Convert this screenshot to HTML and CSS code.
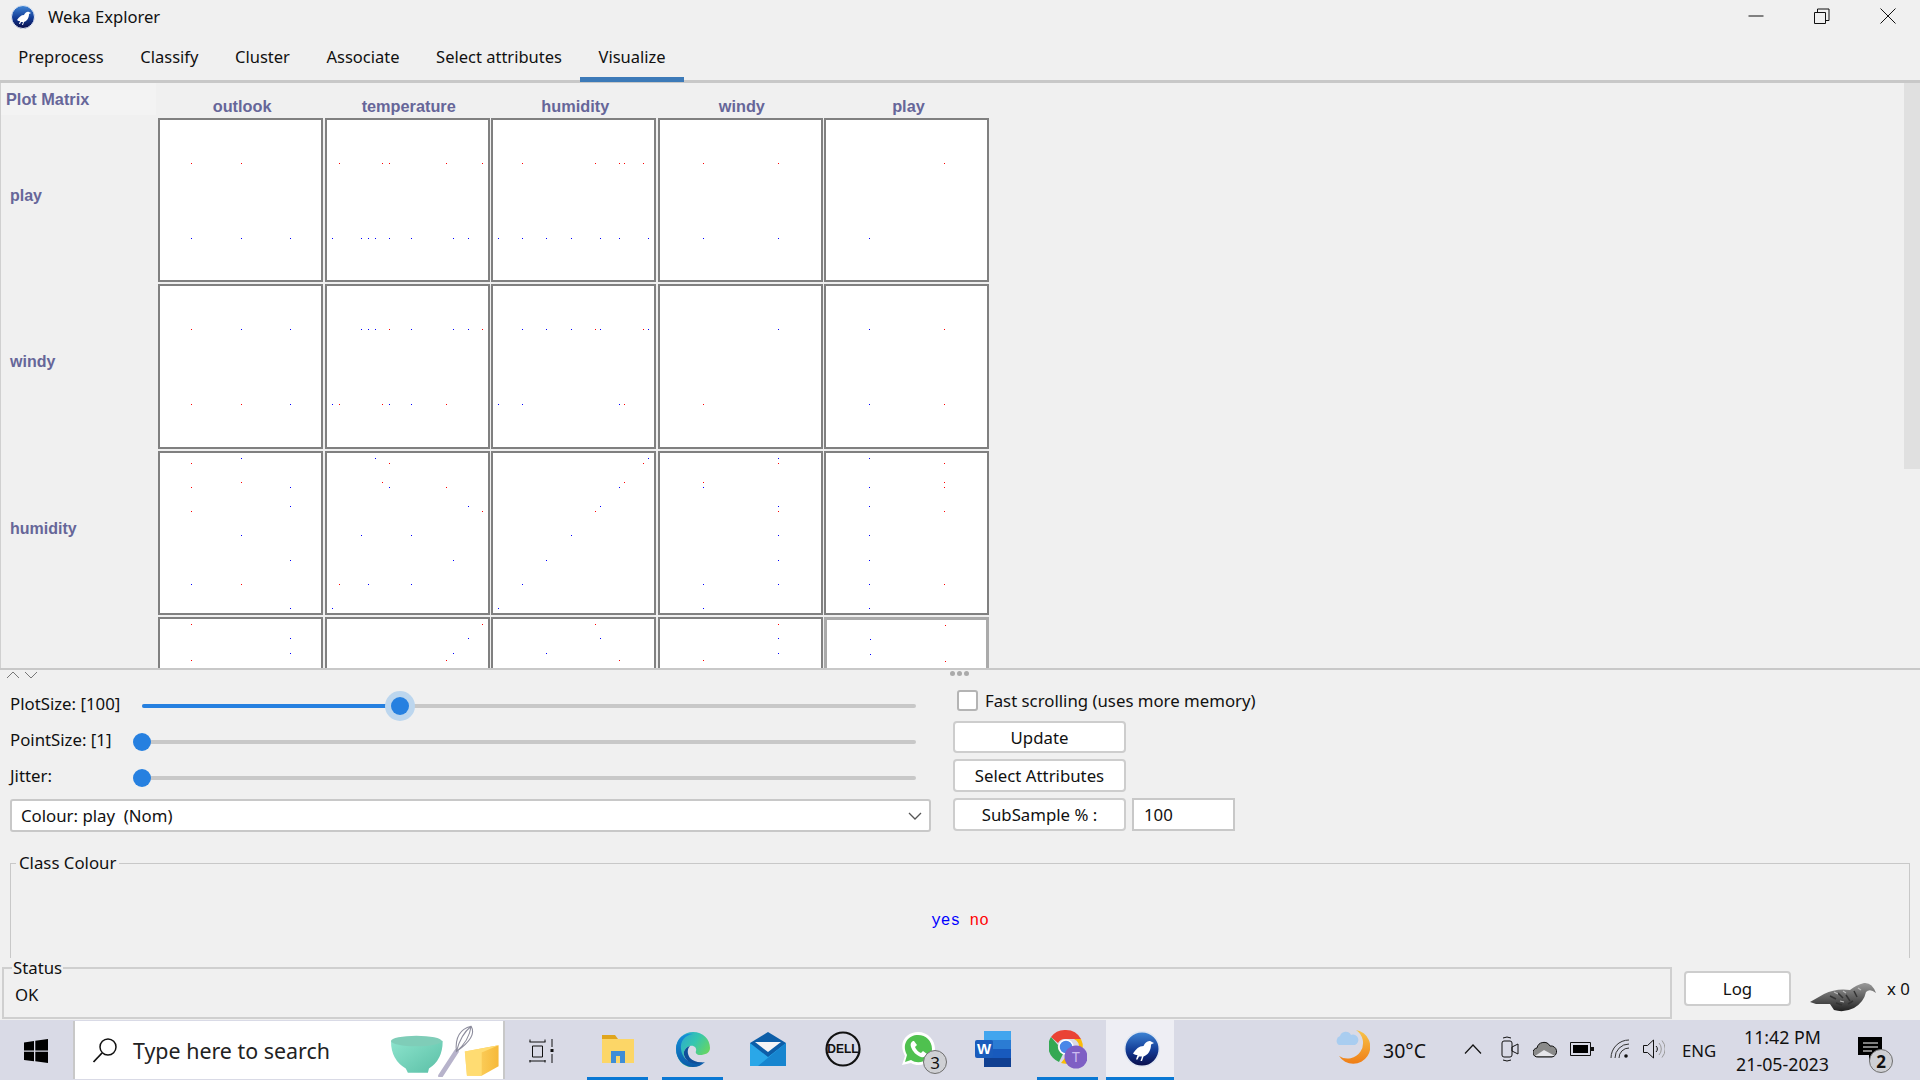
FILE: index.html
```html
<!DOCTYPE html>
<html lang="en">
<head>
<meta charset="UTF-8">
<meta name="viewport" content="width=device-width, initial-scale=1.0">
<title>Weka Explorer</title>
<link rel="stylesheet" href="styles.css">
</head>
<body>

<!-- title bar -->
<div class="titlebar">
    <svg class="app-icon" width="24" height="24" viewBox="0 0 24 24">
        <defs>
            <linearGradient id="wekaBlue" x1="0" y1="0" x2="0" y2="1">
                <stop offset="0" stop-color="#3f86d6"/>
                <stop offset="0.55" stop-color="#123a94"/>
                <stop offset="1" stop-color="#0a0d4a"/>
            </linearGradient>
        </defs>
        <circle cx="12" cy="12" r="11.5" fill="url(#wekaBlue)" stroke="#dfe6f2"/>
        <path d="M6 15c2-3 4-5 7-5 1-2 3-4 5-3l2 1-2 1c0 4-2 7-5 8l-1 3h-1l1-3h-2l-1 2h-1l1-3c-1 0-2 0-3-1z" fill="#fff"/>
    </svg>
    <span class="app-title">Weka Explorer</span>
    <div class="winbtns">
        <svg width="16" height="16" viewBox="0 0 16 16"><path d="M0.5 8h15" stroke="#111" fill="none"/></svg>
        <svg width="16" height="16" viewBox="0 0 16 16"><path d="M0.5 4.5h11v11h-11zM3.5 4.5v-3.500h11.500v11.500h-3.500" stroke="#111" fill="none"/></svg>
        <svg width="16" height="16" viewBox="0 0 16 16"><path d="M0.500 0.500l15 15M15.500 0.500l-15 15" stroke="#111" fill="none"/></svg>
    </div>
</div>

<!-- tabs -->
<div class="tabs">
    <div class="tab">Preprocess</div>
    <div class="tab">Classify</div>
    <div class="tab">Cluster</div>
    <div class="tab">Associate</div>
    <div class="tab">Select attributes</div>
    <div class="tab tab-active">Visualize</div>
</div>

<!-- plot matrix -->
<div class="matrix">
    <div class="matrix-grid">
        <div class="corner">Plot Matrix</div>
        <div class="col-label">outlook</div>
        <div class="col-label">temperature</div>
        <div class="col-label">humidity</div>
        <div class="col-label">windy</div>
        <div class="col-label">play</div>

        <div class="row-label">play</div>
        <div class="cell" data-x="outlook" data-y="play"></div>
        <div class="cell" data-x="temperature" data-y="play"></div>
        <div class="cell" data-x="humidity" data-y="play"></div>
        <div class="cell" data-x="windy" data-y="play"></div>
        <div class="cell" data-x="play" data-y="play"></div>

        <div class="row-label">windy</div>
        <div class="cell" data-x="outlook" data-y="windy"></div>
        <div class="cell" data-x="temperature" data-y="windy"></div>
        <div class="cell" data-x="humidity" data-y="windy"></div>
        <div class="cell" data-x="windy" data-y="windy"></div>
        <div class="cell" data-x="play" data-y="windy"></div>

        <div class="row-label">humidity</div>
        <div class="cell" data-x="outlook" data-y="humidity"></div>
        <div class="cell" data-x="temperature" data-y="humidity"></div>
        <div class="cell" data-x="humidity" data-y="humidity"></div>
        <div class="cell" data-x="windy" data-y="humidity"></div>
        <div class="cell" data-x="play" data-y="humidity"></div>

        <div class="row-label"></div>
        <div class="cell" data-x="outlook" data-y="temperature"></div>
        <div class="cell" data-x="temperature" data-y="temperature"></div>
        <div class="cell" data-x="humidity" data-y="temperature"></div>
        <div class="cell" data-x="windy" data-y="temperature"></div>
        <div class="cell cell-selected" data-x="play" data-y="temperature"></div>
    </div>
    <div class="scroll-thumb"></div>
</div>

<!-- split pane handle -->
<div class="splitbar">
    <svg width="32" height="8" viewBox="0 0 32 8"><path d="M1 7l6-6 6 6M19 1l6 6 6-6" stroke="#777" fill="none"/></svg>
    <span class="grip"><i></i><i></i><i></i></span>
</div>

<!-- controls -->
<div class="controls">
    <div class="controls-left">
        <div class="slider-row">
            <span class="slider-label">PlotSize: [100]</span>
            <div class="track">
                <div class="track-fill" style="width:33.3%"></div>
                <div class="thumb thumb-focus" style="left:33.3%"></div>
            </div>
        </div>
        <div class="slider-row">
            <span class="slider-label">PointSize: [1]</span>
            <div class="track"><div class="thumb" style="left:0%"></div></div>
        </div>
        <div class="slider-row">
            <span class="slider-label">Jitter:</span>
            <div class="track"><div class="thumb" style="left:0%"></div></div>
        </div>
        <div class="combo">
            <span>Colour: play&nbsp; (Nom)</span>
            <svg width="14" height="8" viewBox="0 0 14 8"><path d="M1 1l6 6 6-6" stroke="#555" stroke-width="1.300" fill="none"/></svg>
        </div>
    </div>
    <div class="controls-right">
        <label class="check-row"><span class="checkbox"></span>Fast scrolling (uses more memory)</label>
        <button class="btn btn-update">Update</button>
        <button class="btn btn-select">Select Attributes</button>
        <div class="subsample">
            <button class="btn">SubSample % :</button>
            <div class="field">100</div>
        </div>
    </div>
</div>

<!-- class colour -->
<fieldset class="class-colour">
    <legend>Class Colour</legend>
    <div class="legend-values"><span class="val-yes">yes</span> <span class="val-no">no</span></div>
</fieldset>

<!-- status -->
<div class="status-row">
    <fieldset class="status">
        <legend>Status</legend>
        <div class="status-text">OK</div>
    </fieldset>
    <button class="btn btn-log">Log</button>
    <svg class="status-bird" width="66" height="30" viewBox="0 0 66 30">
        <defs>
            <linearGradient id="birdGrey" x1="0" y1="0" x2="0" y2="1">
                <stop offset="0" stop-color="#9a9a9a"/>
                <stop offset="0.6" stop-color="#555"/>
                <stop offset="1" stop-color="#222"/>
            </linearGradient>
        </defs>
        <path d="M0 20L14 12Q26 6 40 8Q46 3 54 1Q62 0 66 11Q60 6 56 10Q54 20 44 26Q34 31 24 28L20 22L6 22Z" fill="url(#birdGrey)"/>
        <path d="M20 14l6 3M28 11l5 5M36 13l4 6M26 21l6 2M44 9l3 6M38 22l5-3" stroke="#333" stroke-width="1.500" fill="none"/>
        <path d="M24 10l4 2M33 9l3 2M30 19l4 1M48 6l3 2" stroke="#bbb" stroke-width="1.200" fill="none"/>
    </svg>
    <span class="status-count">x 0</span>
</div>

<!-- taskbar -->
<div class="taskbar">
    <div class="start">
        <svg width="24" height="24" viewBox="0 0 24 24"><path d="M0 3.400l10-1.400v9.500H0zM11.300 1.800L24 0v11.500H11.300zM0 12.800h10v9.500L0 20.900zM11.300 12.800H24V24l-12.700-1.800z" fill="#000"/></svg>
    </div>
    <div class="search">
        <svg width="26" height="26" viewBox="0 0 26 26"><circle cx="16" cy="10" r="8" stroke="#111" stroke-width="1.500" fill="none"/><path d="M10 16L1.500 25" stroke="#111" stroke-width="1.800"/></svg>
        <span class="search-text">Type here to search</span>
        <svg class="search-art" width="116" height="53" viewBox="0 0 110 50">
            <defs>
                <linearGradient id="bowl" x1="0" y1="0" x2="1" y2="1">
                    <stop offset="0" stop-color="#8fe6cf"/>
                    <stop offset="1" stop-color="#5bbfa6"/>
                </linearGradient>
                <linearGradient id="butter" x1="0" y1="0" x2="1" y2="0">
                    <stop offset="0" stop-color="#ffdc72"/>
                    <stop offset="1" stop-color="#f6b93a"/>
                </linearGradient>
            </defs>
            <path d="M0 16Q22 8 49 16Q49 34 36 42L35 46H16L14 42Q0 34 0 16Z" fill="url(#bowl)"/>
            <ellipse cx="24" cy="16" rx="24" ry="5" fill="#7fcdb8"/>
            <path d="M47 49L62 26" stroke="#b7b3cb" stroke-width="4.500" stroke-linecap="round"/>
            <path d="M62 26Q60 6 76 2Q82 12 62 26ZM62 26Q66 10 76 2M62 26Q74 16 76 2" stroke="#8d8d9d" stroke-width="1" fill="none"/>
            <path d="M70 26L102 20V40L86 49H72Z" fill="url(#butter)"/>
            <path d="M70 26L102 20L86 27V49H72Z" fill="#ffdc72"/>
        </svg>
    </div>
    <div class="taskview">
        <svg width="26" height="24" viewBox="0 0 26 24"><path d="M0.500 3h16M0.500 22h16M3.500 7h10v11h-10zM1 0.500v2.500M16 0.500v2.500M1 21v2.500M16 21v2.500" stroke="#111" fill="none"/><path d="M23 0v8M23 15v9" stroke="#111" fill="none"/><rect x="21.500" y="10" width="3" height="3" fill="#111"/></svg>
    </div>

    <div class="tb-app tb-open">
        <svg width="34" height="34" viewBox="0 0 34 34">
            <path d="M1 3h13l3 4H1z" fill="#e0a51d"/>
            <path d="M1 7h32v24H1z" fill="#fcd667"/>
            <path d="M10 31V19h14v12h-5v-7h-4v7z" fill="#3f8dd6"/>
        </svg>
    </div>
    <div class="tb-app tb-open">
        <svg width="36" height="36" viewBox="0 0 36 36">
            <defs>
                <linearGradient id="edgeA" x1="0" y1="0" x2="1" y2="0.700">
                    <stop offset="0" stop-color="#2a9fd8"/>
                    <stop offset="0.5" stop-color="#35c6b0"/>
                    <stop offset="1" stop-color="#74d94f"/>
                </linearGradient>
                <linearGradient id="edgeB" x1="0" y1="0" x2="0" y2="1">
                    <stop offset="0" stop-color="#1690da"/>
                    <stop offset="1" stop-color="#0b5aa8"/>
                </linearGradient>
            </defs>
            <path d="M18 1C28 1 35 8 35 17c0 5-5 7-10 7-3 0-5-2-4-4 1-3-2-6-6-5-4 1-7 5-6 9 1 6 7 11 17 9-3 2-6 3-10 3C8 36 1 28 1 18 1 8 9 1 18 1z" fill="url(#edgeA)"/>
            <path d="M1 18C1 8 9 1 18 3 10 4 5 10 6 18c1 9 8 15 18 14 2 0 4-.5 6-1-3 3-7 5-12 5C8 36 1 28 1 18z" fill="url(#edgeB)"/>
            <path d="M9 24c-1-4 2-8 6-9-3 3-3 8 0 12 3 3 8 5 14 4-8 4-18 1-20-7z" fill="#0e4f9a"/>
        </svg>
    </div>
    <div class="tb-app">
        <svg width="36" height="34" viewBox="0 0 36 34">
            <path d="M18 0L36 11v23H0V11z" fill="#0d5ea8"/>
            <path d="M0 11l18 14 18-14v23H0z" fill="#2aa7e8"/>
            <path d="M36 34H8l28-23z" fill="#1785cf"/>
            <path d="M5 10h26L18 20z" fill="#f4f4f6"/>
        </svg>
    </div>
    <div class="tb-app">
        <svg width="36" height="36" viewBox="0 0 36 36">
            <circle cx="18" cy="18" r="16.500" fill="none" stroke="#111" stroke-width="2.200"/>
            <text x="18" y="22" text-anchor="middle" class="dell-text">DELL</text>
        </svg>
    </div>
    <div class="tb-app">
        <svg width="36" height="36" viewBox="0 0 36 36">
            <path d="M2 34l3-9C-3 10 8 1 18 1c10 0 17 8 17 17 0 12-14 20-24 14z" fill="#fff"/>
            <path d="M5 31l2-7C1 12 9 4 18 4c8 0 14 6 14 14 0 10-12 17-21 11z" fill="#4fc14f"/>
            <path d="M13 10c-2 1-3 3-2 6 2 5 5 8 10 10 3 1 5-1 6-3l-4-3-2 2c-3-1-5-4-6-6l2-2-3-4z" fill="#fff"/>
        </svg>
        <span class="tb-badge tb-badge-grey">3</span>
    </div>
    <div class="tb-app">
        <svg width="36" height="36" viewBox="0 0 36 36">
            <path d="M9 0h27v9H9z" fill="#41a5ee"/>
            <path d="M9 9h27v9H9z" fill="#2b7cd3"/>
            <path d="M9 18h27v9H9z" fill="#185abd"/>
            <path d="M9 27h27v9H9z" fill="#103f91"/>
            <rect x="0" y="9" width="18" height="18" rx="2" fill="#1a5cbc"/>
            <text x="9" y="23" text-anchor="middle" class="word-text">W</text>
        </svg>
    </div>
    <div class="tb-app tb-open">
        <svg width="38" height="40" viewBox="0 0 38 40">
            <path d="M17 1A17 17 0 0 1 32 10H17A8 8 0 0 0 9 14L2 8A17 17 0 0 1 17 1z" fill="#ea4335"/>
            <path d="M2 8l7 8a8 8 0 0 0 5 9L10 33A17 17 0 0 1 2 8z" fill="#34a853"/>
            <path d="M32 10a17 17 0 0 1-20 24l7-9a8 8 0 0 0 6-15z" fill="#fbbc05"/>
            <circle cx="17" cy="18" r="7" fill="#4a87e8" stroke="#fff" stroke-width="1.500"/>
            <circle cx="27" cy="28" r="11.500" fill="#7e5fc4"/>
            <text x="27" y="33" text-anchor="middle" class="avatar-text">T</text>
        </svg>
    </div>
    <div class="tb-app tb-open tb-active">
        <svg width="36" height="36" viewBox="0 0 24 24">
            <circle cx="12" cy="12" r="11.500" fill="url(#wekaBlue)" stroke="#dfe6f2"/>
            <path d="M6 15c2-3 4-5 7-5 1-2 3-4 5-3l2 1-2 1c0 4-2 7-5 8l-1 3h-1l1-3h-2l-1 2h-1l1-3c-1 0-2 0-3-1z" fill="#fff"/>
        </svg>
    </div>

    <!-- system tray -->
    <div class="tray">
        <svg class="t-weather" width="34" height="38" viewBox="0 0 34 38">
            <defs>
                <linearGradient id="moon" x1="0" y1="0" x2="0" y2="1">
                    <stop offset="0" stop-color="#f8c54a"/>
                    <stop offset="1" stop-color="#ef7d16"/>
                </linearGradient>
            </defs>
            <path d="M20 2A17 17 0 1 1 3 28A14 14 0 0 0 20 2z" fill="url(#moon)"/>
            <path d="M3 17a5 5 0 0 1 1-9 6 6 0 0 1 11-1 5 5 0 0 1 4 10z" fill="#a9cdf0"/>
        </svg>
        <span class="t-temp">30°C</span>
        <svg class="t-chevron" width="18" height="10" viewBox="0 0 18 10"><path d="M1 9.500l8-8.500 8 8.500" stroke="#111" stroke-width="1.200" fill="none"/></svg>
        <svg class="t-cam" width="18" height="26" viewBox="0 0 18 26"><path d="M1 7a2 2 0 0 1 2-2h6a2 2 0 0 1 2 2v12a2 2 0 0 1-2 2H3a2 2 0 0 1-2-2zM11 11l6-3v10l-6-3z" stroke="#111" fill="none"/><path d="M2 2q4-2 8 0M2 24q4 2 8 0" stroke="#111" fill="none"/></svg>
        <svg class="t-cloud" width="24" height="18" viewBox="0 0 24 18"><path d="M5 17a4.500 4.500 0 0 1-1-9 7 7 0 0 1 13-2 5.500 5.500 0 0 1 2 11z" fill="#8a8a8a" stroke="#111"/><path d="M2 16l9-6 11 6z" fill="#e6e6ea"/></svg>
        <svg class="t-battery" width="24" height="14" viewBox="0 0 24 14"><path d="M0.500 0.500h20v13h-20z" stroke="#111" fill="none"/><rect x="3" y="3" width="15" height="8" fill="#000"/><rect x="21" y="5" width="3" height="4" fill="#111"/></svg>
        <svg class="t-wifi" width="20" height="20" viewBox="0 0 20 20"><path d="M1 19A18 18 0 0 1 19 1M5 19A14 14 0 0 1 19 5M9 19A10 10 0 0 1 19 9" stroke="#333" fill="none"/><circle cx="16" cy="17" r="1.800" fill="#111"/></svg>
        <svg class="t-volume" width="22" height="20" viewBox="0 0 22 20"><path d="M0.500 6.500h4l6-5.500v18l-6-5.500h-4z" stroke="#111" fill="none"/><path d="M13 7a4 4 0 0 1 0 6" stroke="#111" fill="none"/><path d="M16 4a9 9 0 0 1 0 12M19 1.500a13 13 0 0 1 0 17" stroke="#999" fill="none"/></svg>
        <span class="t-lang">ENG</span>
        <div class="t-clock">
            <span>11:42 PM</span>
            <span>21-05-2023</span>
        </div>
        <div class="t-notify">
            <svg width="24" height="24" viewBox="0 0 24 24"><path d="M0 0h24v18H15l-4 6v-6H0z" fill="#000"/><path d="M5 6h15M5 10h15M5 14h9" stroke="#fff" fill="none"/></svg>
            <span class="tb-badge tb-badge-notify">2</span>
        </div>
    </div>
</div>

<script src="plot.js"></script>
</body>
</html>
```

FILE: styles.css
```css
* {
    box-sizing: border-box;
}
body {
    margin: 0;
    width: 1920px;
    height: 1080px;
    overflow: hidden;
    background-color: #f0f0f0;
    color: #111;
    font-family: "Noto Sans", "Open Sans", sans-serif;
    font-size: 16.800px;
    display: flex;
    flex-direction: column;
}

/* title bar */
.titlebar {
    height: 40px;
    flex: none;
    display: flex;
    align-items: flex-start;
    padding: 5px 0 0 11px;
}
.app-title {
    margin-left: 13px;
    font-size: 16.600px;
    line-height: 24px;
}
.winbtns {
    margin-left: auto;
    margin-top: 3px;
    margin-right: 24px;
    display: flex;
    gap: 50px;
}

/* tabs */
.tabs {
    height: 43px;
    flex: none;
    display: flex;
    border-bottom: 3px solid #c8c8c8;
}
.tab {
    padding: 0 18.300px;
    line-height: 34px;
    height: 42px;
    font-size: 16.500px;
}
.tab-active {
    border-bottom: 5px solid #3d7ab8;
}

/* plot matrix */
.matrix {
    height: 585px;
    flex: none;
    overflow: hidden;
    position: relative;
    border-left: 1px solid #d0d0d0;
}
.matrix-grid {
    display: grid;
    grid-template-columns: 155.500px repeat(5, 165px);
    column-gap: 1.600px;
    grid-template-rows: 33px repeat(4, 164.300px);
    row-gap: 2px;
}
.corner {
    background-color: #f3f3f3;
    height: 32px;
    margin-right: 1px;
    padding-left: 5px;
    font-family: "Liberation Sans", Arial, sans-serif;
    font-weight: bold;
    font-size: 16.300px;
    line-height: 32px;
    color: #666699;
}
.col-label {
    font-family: "Liberation Sans", Arial, sans-serif;
    font-weight: bold;
    font-size: 16.300px;
    color: #666699;
    text-align: center;
    padding-left: 3px;
    line-height: 46px;
    height: 33px;
}
.row-label {
    font-family: "Liberation Sans", Arial, sans-serif;
    font-weight: bold;
    font-size: 16px;
    color: #666699;
    padding: 69px 0 0 9px;
}
.cell {
    background-color: #fff;
    border: 2px solid #808080;
    position: relative;
}
.cell svg {
    display: block;
    position: absolute;
    top: 0;
    left: 0;
}
.cell-selected {
    border: 3px solid #aaa;
    border-bottom: none;
}
.scroll-thumb {
    position: absolute;
    top: 0;
    right: 0;
    width: 16px;
    height: 386px;
    background-color: #e0e0e0;
}

/* split pane handle */
.splitbar {
    height: 18px;
    flex: none;
    display: flex;
    align-items: flex-start;
    border-top: 2px solid #c8c8c8;
    padding: 1px 0 0 6px;
}
.grip {
    margin-left: 912px;
    margin-top: 0;
    display: flex;
    gap: 2px;
}
.grip i {
    width: 5px;
    height: 5px;
    border-radius: 50%;
    background-color: #aaa;
}

/* controls */
.controls {
    flex: none;
    height: 166px;
    display: flex;
    padding-left: 10px;
}
.controls-left {
    width: 921px;
    flex: none;
    display: flex;
    flex-direction: column;
    padding-top: 2px;
}
.slider-row {
    height: 36px;
    display: flex;
    align-items: center;
}
.slider-label {
    width: 132px;
    flex: none;
    margin-top: -5px;
}
.track {
    position: relative;
    flex: 1;
    margin-right: 15px;
    height: 4px;
    border-radius: 2px;
    background-color: #c8c8c8;
}
.track-fill {
    height: 4px;
    border-radius: 2px;
    background-color: #2680e0;
}
.thumb {
    position: absolute;
    top: 50%;
    width: 18px;
    height: 18px;
    margin: -9px 0 0 -9px;
    border-radius: 50%;
    background-color: #2680e0;
}
.thumb-focus {
    box-shadow: 0 0 0 6px #bcd6ee;
}
.combo {
    margin-top: 3px;
    height: 33px;
    display: flex;
    align-items: center;
    justify-content: space-between;
    padding: 0 7px 0 9px;
    background-color: #fff;
    border: 2px solid #c8c8c8;
    border-radius: 3px;
}
.controls-right {
    margin-left: 22px;
    display: flex;
    flex-direction: column;
    gap: 6px;
}
.check-row {
    height: 30px;
    display: flex;
    align-items: center;
    padding-left: 4px;
    margin-top: -1px;
    margin-bottom: 0;
}
.checkbox {
    width: 21px;
    height: 21px;
    margin-right: 7px;
    background-color: #fff;
    border: 2px solid #b4b4b4;
    border-radius: 3px;
}
.btn {
    width: 173px;
    background-color: #fff;
    border: 2px solid #cdcdcd;
    border-radius: 4px;
    padding: 0;
    font-family: inherit;
    font-size: 16.800px;
    color: #111;
}
.btn-update {
    height: 32px;
}
.btn-select {
    height: 33px;
}
.subsample {
    height: 33px;
    display: flex;
    gap: 6px;
}
.field {
    width: 103px;
    background-color: #fff;
    border: 2px solid #c8c8c8;
    padding-left: 10px;
    line-height: 29px;
}

/* class colour */
.class-colour {
    flex: none;
    height: 106px;
    margin: 0 10px;
    padding: 0;
    border: 1px solid #c8c8c8;
    border-bottom: none;
}
.class-colour legend {
    margin-left: 5px;
    padding: 0 3px;
    line-height: 22px;
}
.legend-values {
    padding-top: 38px;
    text-align: center;
    font-family: "Liberation Mono", monospace;
    font-size: 16px;
    line-height: 18px;
}
.val-yes {
    color: #0000ff;
}
.val-no {
    color: #ff0000;
}

/* status */
.status-row {
    flex: 1;
    display: flex;
    align-items: flex-start;
    min-height: 0;
}
.status {
    width: 1670px;
    margin: 0 0 0 2px;
    height: 61px;
    padding: 0;
    border: 2px solid #cfcfcf;
}
.status legend {
    margin-left: 8px;
    padding: 0 1px;
    line-height: 20px;
}
.status-text {
    padding-left: 11px;
    line-height: 26px;
    margin-top: 4px;
}
.btn-log {
    width: 107px;
    height: 35px;
    margin: 13px 0 0 12px;
}
.status-bird {
    margin: 24px 0 0 19px;
}
.status-count {
    margin: 21px 0 0 11px;
    line-height: 20px;
}

/* taskbar */
.taskbar {
    height: 60px;
    flex: none;
    display: flex;
    align-items: center;
    background-color: #d9dae6;
}
.start {
    width: 73px;
    flex: none;
    padding: 2px 0 0 24px;
}
.start svg {
    display: block;
}
.search {
    width: 432px;
    height: 58px;
    flex: none;
    display: flex;
    align-items: center;
    padding-left: 17px;
    background-color: #fff;
    border: 2px solid #c8c8c8;
    border-width: 0 2px;
}
.search-text {
    margin-left: 15px;
    font-size: 21.400px;
    color: #222;
}
.search-art {
    margin-left: auto;
    margin-right: -4px;
}
.taskview {
    width: 75px;
    flex: none;
    padding: 1px 0 0 24px;
}
.taskview svg {
    display: block;
}
.tb-app {
    position: relative;
    width: 61px;
    height: 60px;
    margin: 0 7px;
    flex: none;
    display: flex;
    align-items: center;
    justify-content: center;
    border-bottom: 3px solid transparent;
}
.tb-open {
    border-bottom-color: #0a78d4;
}
.tb-active {
    background-color: #eeeef4;
    width: 68px;
    margin: 0 0 0 1px;
    padding-left: 3px;
}
.dell-text {
    font-family: "Liberation Sans", Arial, sans-serif;
    font-weight: bold;
    font-size: 12px;
    fill: #111;
}
.word-text {
    font-family: "Liberation Sans", Arial, sans-serif;
    font-weight: bold;
    font-size: 15px;
    fill: #fff;
}
.avatar-text {
    font-size: 14px;
    fill: #cdbcf0;
}
.tb-badge {
    position: absolute;
    display: flex;
    align-items: center;
    justify-content: center;
    width: 24px;
    height: 24px;
    border-radius: 50%;
    font-size: 17px;
    background-color: #cfd0d4;
    border: 1px solid #6f6f6f;
}
.tb-badge-grey {
    left: 36px;
    top: 30px;
}
.tb-badge-notify {
    left: 11px;
    top: 12px;
    font-weight: bold;
}

/* system tray */
.tray {
    margin-left: auto;
    padding-right: 38px;
    display: flex;
    align-items: center;
    height: 60px;
}
.t-weather {
    margin-top: -6px;
}
.t-temp {
    margin-left: 13px;
    width: 44px;
    font-size: 19.500px;
    white-space: nowrap;
}
.t-chevron {
    margin-left: 37px;
    margin-top: -2px;
}
.t-cam {
    margin-left: 19px;
    margin-top: -2px;
}
.t-cloud {
    margin-left: 14px;
    margin-top: -2px;
}
.t-battery {
    margin-left: 13px;
    margin-top: -2px;
}
.t-wifi {
    margin-left: 16px;
    margin-top: -2px;
}
.t-volume {
    margin-left: 13px;
    margin-top: -2px;
}
.t-lang {
    margin-left: 17px;
    width: 33px;
    font-size: 16.800px;
    white-space: nowrap;
}
.t-clock {
    margin-left: 21px;
    width: 93px;
    display: flex;
    flex-direction: column;
    align-items: center;
    gap: 5px;
    font-size: 17.800px;
    line-height: 22px;
    white-space: nowrap;
}
.t-notify {
    position: relative;
    margin-left: 29px;
    width: 24px;
    height: 24px;
    margin-top: -2px;
}
```

FILE: plot.js
```js
// weather data set: outlook, temperature, humidity, windy, play
const instances = [
    ['sunny', 69, 70, 'FALSE', 'yes'],
    ['rainy', 65, 70, 'TRUE', 'no'],
    ['sunny', 75, 70, 'TRUE', 'yes'],
    ['sunny', 80, 90, 'TRUE', 'no'],
    ['overcast', 72, 90, 'TRUE', 'yes'],
    ['sunny', 85, 85, 'FALSE', 'no'],
    ['overcast', 83, 86, 'FALSE', 'yes'],
    ['rainy', 70, 96, 'FALSE', 'yes'],
    ['rainy', 68, 80, 'FALSE', 'yes'],
    ['overcast', 64, 65, 'TRUE', 'yes'],
    ['sunny', 72, 95, 'FALSE', 'no'],
    ['rainy', 75, 80, 'FALSE', 'yes'],
    ['overcast', 81, 75, 'FALSE', 'yes'],
    ['rainy', 71, 91, 'TRUE', 'no']
];
const columns = { outlook: 0, temperature: 1, humidity: 2, windy: 3, play: 4 };

// pixel position inside a cell, for a value on the horizontal axis
const toX = {
    outlook: v => ({ sunny: 31, rainy: 81, overcast: 130 })[v],
    temperature: v => 5 + (v - 64) * 150 / 21,
    humidity: v => 5 + (v - 65) * 150 / 31,
    windy: v => (v === 'TRUE' ? 43 : 118),
    play: v => (v === 'yes' ? 43 : 118)
};
// same for the vertical axis
const toY = {
    temperature: v => 5 + (85 - v) * 150 / 21,
    humidity: v => 5 + (96 - v) * 150 / 31,
    windy: v => (v === 'FALSE' ? 43 : 118),
    play: v => (v === 'no' ? 43 : 118)
};

document.querySelectorAll('.cell').forEach(cell => {
    const xAttr = cell.getAttribute('data-x');
    const yAttr = cell.getAttribute('data-y');
    let dots = '';
    instances.forEach(row => {
        const x = Math.round(toX[xAttr](row[columns[xAttr]]));
        const y = Math.round(toY[yAttr](row[columns[yAttr]]));
        const colour = row[4] === 'yes' ? '#0000ff' : '#ff0000';
        dots += `<rect x="${x}" y="${y}" width="1" height="1" fill="${colour}"/>`;
    });
    cell.innerHTML = `<svg width="161" height="161" shape-rendering="crispEdges">${dots}</svg>`;
});
```
